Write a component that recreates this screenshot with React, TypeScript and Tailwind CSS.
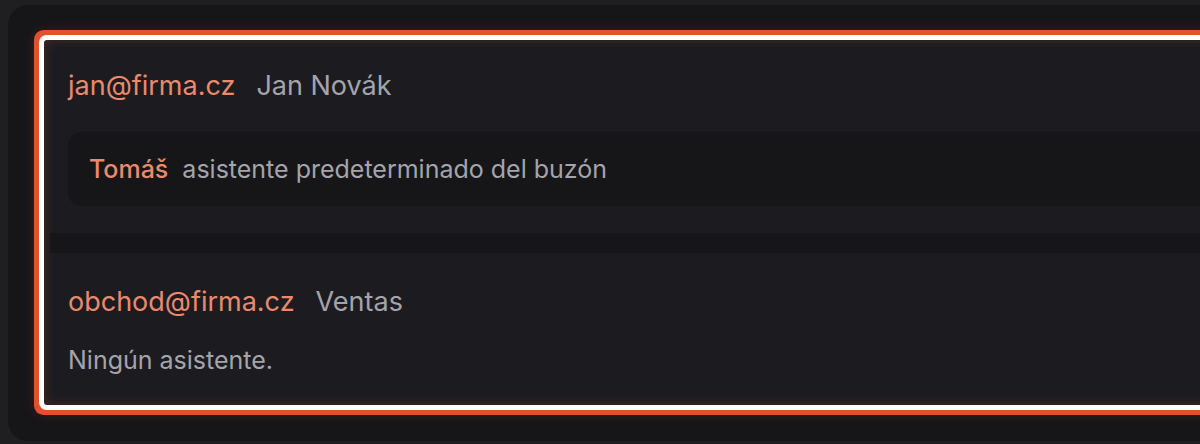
export default function App() {
  return (
    <div
      className="h-[444px] w-[1200px] overflow-hidden bg-[#1f1f22] pt-[5px] pl-[8px]"
      style={{ fontFamily: "Inter, 'Noto Sans', sans-serif" }}
    >
      <div className="w-[1260px] h-[436px] rounded-[20px] bg-[#161618] pl-[36px] pt-[35px]">
        <div className="w-[1200px] rounded-[3px] bg-[#1c1c20] shadow-[0_0_0_5px_#ffffff,0_0_0_10px_#e2502f,0_0_14px_8px_rgba(226,80,47,0.22),inset_0_0_12px_rgba(226,80,47,0.22)]">
          <div className="px-[24px] pt-[26px] pb-[27px]">
            <div className="flex h-[40px] items-center gap-[21px] text-[27px]">
              <span className="text-[#e98a6d]">jan@firma.cz</span>
              <span className="text-[#a4a4ac]">Jan Novák</span>
            </div>
            <div className="mt-[26px] flex h-[74px] items-center gap-[14px] rounded-[14px] bg-[#161618] pl-[21px] pt-[2px] text-[25px]">
              <span className="font-medium text-[#e98a6d]">Tomáš</span>
              <span className="text-[#a4a4ac]">asistente predeterminado del buzón</span>
            </div>
          </div>
          <div className="ml-[6px] h-[20px] bg-[#161618]" />
          <div className="px-[24px] pt-[29px] pb-[27px]">
            <div className="flex h-[40px] items-center gap-[21px] text-[27px]">
              <span className="text-[#e98a6d]">obchod@firma.cz</span>
              <span className="text-[#a4a4ac]">Ventas</span>
            </div>
            <div className="mt-[20px] flex h-[36px] items-center pt-[2px] text-[25px] text-[#a4a4ac]">
              Ningún asistente.
            </div>
          </div>
        </div>
      </div>
    </div>
  );
}
